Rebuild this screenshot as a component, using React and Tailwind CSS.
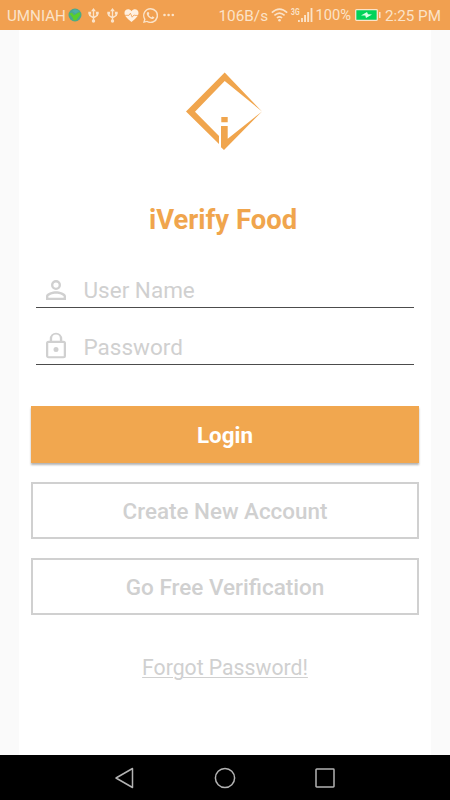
import React from "react";

function Usb({ className }) {
  return (
    <svg className={className} width="11" height="15" viewBox="0 0 11 15" fill="none" stroke="#fbe3c9" strokeWidth="1.4">
      <path d="M5.5 2v11M1.7 5v2.4l3.8 2.4M9.3 5v2.4L5.5 9.8" />
      <path d="M5.5 0 7.9 3.3H3.1zM.3 3.8h2.8v2.6H.3zM7.9 3.8h2.8v2.6H7.9z" fill="#fbe3c9" stroke="none" />
      <circle cx="5.5" cy="13" r="1.7" fill="#fbe3c9" stroke="none" />
    </svg>
  );
}

function StatusBar() {
  return (
    <header className="flex h-[30px] items-center bg-[#f1a050] pl-[7px] text-[15px] leading-[30px] whitespace-nowrap text-[#fbe3c9]">
      <span className="w-[61px] translate-y-px text-[15.2px]">UMNIAH</span>
      <svg width="14" height="14" viewBox="0 0 14 14">
        <circle cx="7" cy="7" r="6.5" fill="#4ba78e" />
        <path d="M1.3 5.5 4 4.8l2 2.5L11.5 4l1 2.5-4 5.5-3 .5-1-3z" fill="#59cf2c" />
        <path d="M7 1.2 11.5 3 7.5 5.5 4 3z" fill="#4cafa6" />
      </svg>
      <Usb className="ml-[6px]" />
      <Usb className="ml-[8px]" />
      <svg className="ml-[6px]" width="15" height="15" viewBox="0 0 15 15">
        <path d="M7.5 14C4.5 11.5.5 8.7.5 5.1.5 1 5.3.1 7.5 3.3 9.7.1 14.5 1 14.5 5.1c0 3.6-4 6.4-7 8.9z" fill="#fff0e0" />
        <path d="M1 7.3h4L6.4 5.2l1.8 4L10 6.9l.8.5H14" fill="none" stroke="#f1a050" strokeWidth=".8" />
      </svg>
      <svg className="ml-[4px]" width="15" height="15" viewBox="0 0 24 24" fill="#fbe3c9">
        <path d="M17.472 14.382c-.297-.149-1.758-.867-2.03-.967-.273-.099-.471-.148-.67.15-.197.297-.767.966-.94 1.164-.173.199-.347.223-.644.075-.297-.15-1.255-.463-2.39-1.475-.883-.788-1.48-1.761-1.653-2.059-.173-.297-.018-.458.13-.606.134-.133.298-.347.446-.52.149-.174.198-.298.298-.497.099-.198.05-.371-.025-.52-.075-.149-.669-1.612-.916-2.207-.242-.579-.487-.5-.669-.51l-.57-.01c-.198 0-.52.074-.792.372s-1.04 1.016-1.04 2.479 1.065 2.875 1.213 3.074c.149.198 2.096 3.2 5.077 4.487.709.306 1.262.489 1.694.625.712.227 1.36.195 1.871.118.571-.085 1.758-.719 2.006-1.413.248-.694.248-1.289.173-1.413-.074-.124-.272-.198-.57-.347" />
        <path d="M12 0A12 12 0 0 0 1.7 18L0 24l6.2-1.6A12 12 0 1 0 12 0zm0 2.2a9.8 9.8 0 1 1-5.3 18.1l-3.6 1 1-3.5A9.8 9.8 0 0 1 12 2.2z" />
      </svg>
      <svg className="ml-[5px]" width="12" height="4" viewBox="0 0 12 4" fill="#fbe3c9">
        <circle cx="1.5" cy="2" r="1.3" /><circle cx="5.6" cy="2" r="1.3" /><circle cx="9.8" cy="2" r="1.3" />
      </svg>
      <span className="ml-[43.500px] w-[52px] translate-y-px text-[15.3px]">106B/s</span>
      <svg width="17" height="14" viewBox="0 0 17 14" fill="none" stroke="#fbe3c9" strokeWidth="1.6">
        <path d="M.8 4.7Q8.5-2.4 16.2 4.7M3.4 7.4q5.1-4.6 10.2 0M5.9 10q2.6-2.2 5.2 0" />
        <circle cx="8.5" cy="12.2" r="1.3" fill="#fbe3c9" stroke="none" />
      </svg>
      <span className="ml-[3.500px] w-[8px] origin-left -translate-y-[3px] scale-x-[0.8] text-[8.5px] font-bold">3G</span>
      <svg className="-ml-px" width="15" height="14" viewBox="0 0 15 14" fill="#fbe3c9">
        <path d="M0 12h1.8v2H0zM3.1 10h1.8v4H3.1zM6.1 7H8v7H6.1zM9.2 4h1.9v10H9.2zM12.6 0h1.8v14h-1.8z" />
      </svg>
      <span className="ml-[2.500px] w-[39.500px] text-[14.7px]">100%</span>
      <svg width="26" height="12" viewBox="0 0 26 12">
        <rect x=".7" y=".7" width="21.6" height="10.6" rx=".8" fill="#00d35a" stroke="#fbe3c9" strokeWidth="1.3" />
        <path d="M24 3h1.5v6H24z" fill="#fbe3c9" />
        <path d="M6 6.4 12 3l1 2.3 4 .2L11 9l-.7-2.4z" fill="#d9ffe6" />
      </svg>
      <span className="ml-[4px] translate-y-px text-[15.2px]">2:25 PM</span>
    </header>
  );
}

function Logo() {
  return (
    <svg className="mt-[40px] h-[82px] w-[80px] shrink-0" viewBox="0 0 80 82" fill="#f0a54d">
      <path d="M39.7 2.5 77 41.5 39.7 11 10 41.7 34 66v8L1 41.5z" />
      <path d="M36 56h6.7v12.7L77 41.5 39 80l-3-2.8zM36.3 47h6.4v5.2h-6.4z" />
    </svg>
  );
}

function Field({ label, children, className }) {
  return (
    <label className={`flex w-[378px] shrink-0 items-center border-b border-[#4c4c4c] text-[#d0d0d0] ${className}`}>
      <svg className="ml-[5px] h-[30px] w-[30px] shrink-0" viewBox="0 0 24 24" fill="currentColor">{children}</svg>
      <span className="ml-[12.5px] text-[22.5px] leading-[28px]">{label}</span>
    </label>
  );
}

export default function App() {
  return (
    <div className="flex h-[800px] w-[450px] flex-col overflow-hidden bg-[#fafafa] font-['Roboto','Liberation_Sans',sans-serif]">
      <StatusBar />
      <main className="ml-[19px] flex h-[725px] w-[412px] flex-col items-center bg-white">
        <Logo />
        <h1 className="mt-[50px] mr-[4px] h-[36px] shrink-0 text-[27.4px] leading-[36px] font-bold whitespace-nowrap text-[#f0a54d]">iVerify Food</h1>
        <Field label="User Name" className="mt-[38px] h-[32px] pb-[3px]">
          <path d="M12 5.9a2.1 2.1 0 1 1 0 4.2 2.1 2.1 0 0 1 0-4.2m0 9c2.97 0 6.1 1.46 6.1 2.1v1.1H5.9V17c0-.64 3.13-2.1 6.1-2.1M12 4a4 4 0 1 0 0 8 4 4 0 0 0 0-8m0 9c-2.67 0-8 1.34-8 4v3h16v-3c0-2.66-5.33-4-8-4" />
        </Field>
        <Field label="Password" className="mt-[24px] h-[33px] pb-[2px]">
          <path d="M18 7H17V5.500A5 5 0 0 0 7 5.500V7H6a2 2 0 0 0-2 2v10c0 1.1.9 2 2 2h12a2 2 0 0 0 2-2V9a2 2 0 0 0-2-2M8.900 5.100a3.100 3.100 0 0 1 6.200 0V7H8.900zM18.200 19.300H5.800V8.800h12.400zm-6.200-3.300a2 2 0 1 0 0-4 2 2 0 0 0 0 4" />
        </Field>
        <button className="mt-[41px] h-[57px] w-[388px] shrink-0 bg-[#f1a74f] pt-[2px] text-[22.4px] font-bold text-white shadow-[0_2px_2px_rgba(0,0,0,0.3)]">Login</button>
        <button className="mt-[19px] h-[57px] w-[388px] shrink-0 border-2 border-[#d0d0d0] pt-[2px] text-[22.4px] font-medium text-[#d0d0d0]">Create New Account</button>
        <button className="mt-[19px] h-[57px] w-[388px] shrink-0 border-2 border-[#d0d0d0] pt-[3px] text-[22.5px] font-medium text-[#d0d0d0]">Go Free Verification</button>
        <a className="mt-[38px] text-[21.2px] leading-[30px] text-[#d0d0d0] underline decoration-1 underline-offset-2">Forgot Password!</a>
      </main>
      <nav className="flex h-[45px] items-center justify-center gap-[78px] bg-black">
        {[
          <path key="back" d="M2 11 18.5 1.5v19z" />,
          <circle key="home" cx="11" cy="11" r="9.6" />,
          <rect key="recent" x="2" y="2" width="18" height="18" rx=".7" />,
        ].map((shape, i) => (
          <svg key={i} width="22" height="22" viewBox="0 0 22 22" fill="none" stroke="#b3b3b3" strokeWidth="1.5" strokeLinejoin="round">{shape}</svg>
        ))}
      </nav>
    </div>
  );
}
